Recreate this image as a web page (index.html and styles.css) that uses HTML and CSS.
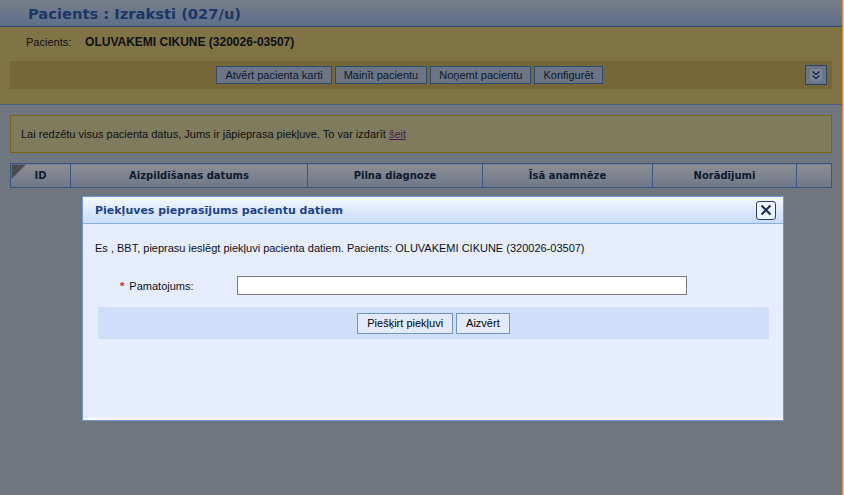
FILE: index.html
```html
<!DOCTYPE html>
<html lang="lv">
<head>
    <meta charset="UTF-8">
    <title>Pacients : Izraksti (027/u)</title>
    <link rel="stylesheet" href="styles.css">
</head>
<body>
    <div class="screen">
        <div class="page">
            <div class="title-bar">
                <h1>Pacients : Izraksti (027/u)</h1>
            </div>

            <div class="patient-panel">
                <div class="patient-line">
                    <span class="patient-label">Pacients:</span>
                    <strong>OLUVAKEMI CIKUNE (320026-03507)</strong>
                </div>
                <div class="toolbar">
                    <div class="toolbar-buttons">
                        <button class="tool-btn">Atvērt pacienta karti</button>
                        <button class="tool-btn">Mainīt pacientu</button>
                        <button class="tool-btn">Noņemt pacientu</button>
                        <button class="tool-btn">Konfigurēt</button>
                    </div>
                    <button class="expand-btn" title="Izvērst">
                        <svg width="14" height="14" viewBox="0 0 14 14">
                            <rect x="1" y="1" width="12" height="12" fill="#7d8696"/>
                            <path d="M3.5 3.5 L7 6.5 L10.5 3.5 M3.5 7.5 L7 10.5 L10.5 7.5" fill="none" stroke="#1b2d4f" stroke-width="1.6"/>
                        </svg>
                    </button>
                </div>
            </div>

            <div class="content">
                <div class="notice">
                    Lai redzētu visus pacienta datus, Jums ir jāpieprasa piekļuve. To var izdarīt <a href="#">šeit</a>
                </div>

                <table class="grid">
                    <thead>
                        <tr>
                            <th class="col-id">ID</th>
                            <th class="col-date">Aizpildīšanas datums</th>
                            <th class="col-diag">Pilna diagnoze</th>
                            <th class="col-anam">Īsā anamnēze</th>
                            <th class="col-notes">Norādījumi</th>
                            <th class="col-extra"></th>
                        </tr>
                    </thead>
                </table>
            </div>
        </div>
        <div class="edge"></div>
    </div>

    <div class="dialog">
        <div class="dialog-header">
            <span class="dialog-title">Piekļuves pieprasījums pacientu datiem</span>
            <button class="dialog-close" title="Aizvērt">
                <svg width="12" height="12" viewBox="0 0 12 12">
                    <path d="M1.5 1.5 L10.5 10.5 M10.5 1.5 L1.5 10.5" stroke="#1c2f55" stroke-width="2.2"/>
                </svg>
            </button>
        </div>
        <div class="dialog-body">
            <p class="dialog-text">Es , BBT, pieprasu ieslēgt piekļuvi pacienta datiem. Pacients: OLUVAKEMI CIKUNE (320026-03507)</p>
            <div class="form-row">
                <label for="reason"><span class="required">*</span> Pamatojums:</label>
                <input type="text" id="reason">
            </div>
            <div class="dialog-actions">
                <button class="dlg-btn">Piešķirt piekļuvi</button>
                <button class="dlg-btn">Aizvērt</button>
            </div>
        </div>
    </div>
</body>
</html>
```

FILE: styles.css
```css
body {
    margin: 0;
    font-family: "Liberation Sans", Arial, sans-serif;
    font-size: 11px;
    color: #0e1016;
    background: #6f7680;
}

.screen {
    display: flex;
    height: 495px;
}

.page {
    flex: 1;
    background: #6f7680;
}

.edge {
    width: 1px;
    border-left: 1px solid #e38d22;
    background: #d8d8d8;
}

/* title */
.title-bar {
    height: 26px;
    background: linear-gradient(to bottom, #787e88, #5e6f8b);
    border-bottom: 1px solid #2f4a74;
    padding-left: 28px;
}

.title-bar h1 {
    margin: 0;
    font-family: "DejaVu Sans", Verdana, sans-serif;
    font-size: 14.7px;
    font-weight: bold;
    line-height: 28px;
    color: #1a3767;
}

/* patient panel */
.patient-panel {
    background: #807444;
    border-bottom: 1px solid #4a5f80;
    padding: 8px 10px 15px;
}

.patient-line {
    height: 14px;
    line-height: 14px;
    padding-left: 16px;
    margin-bottom: 12px;
}

.patient-label {
    display: inline-block;
    width: 56px;
}

.patient-line strong {
    font-size: 12px;
}

.toolbar {
    display: flex;
    align-items: center;
    height: 28px;
    background: #766836;
    padding-right: 5px;
}

.toolbar-buttons {
    flex: 1;
    display: flex;
    justify-content: center;
    gap: 3px;
    padding-left: 4px;
}

.tool-btn {
    height: 18px;
    padding: 0 8px;
    font-family: "Liberation Sans", Arial, sans-serif;
    font-size: 11px;
    color: #0e1a2c;
    background: #6c7584;
    border: 1px solid #2e4a73;
}

.expand-btn {
    width: 22px;
    height: 20px;
    padding: 0;
    display: flex;
    align-items: center;
    justify-content: center;
    background: #6c7584;
    border: 1px solid #2a4470;
}

/* content */
.content {
    padding: 10px 10px 0;
}

.notice {
    height: 36px;
    line-height: 37px;
    padding-left: 10px;
    background: #7f7b5d;
    border: 1px solid #7a650e;
    margin-bottom: 10px;
}

.notice a {
    color: #4b1a60;
}

.grid {
    width: 100%;
    border-collapse: collapse;
}

.grid th {
    height: 23px;
    padding: 0;
    font-family: "DejaVu Sans", Verdana, sans-serif;
    font-size: 10px;
    font-weight: bold;
    color: #0f1a30;
    background: linear-gradient(to bottom, #8c8e94, #6e7788);
    border: 1px solid #375683;
}

.grid .col-id {
    width: 59px;
    background: linear-gradient(135deg, #4a4a4c 10px, transparent 10px),
                linear-gradient(to bottom, #8c8e94, #6e7788);
}

.grid .col-date { width: 236px; }
.grid .col-diag { width: 174px; }
.grid .col-anam { width: 169px; }
.grid .col-notes { width: 143px; }

/* dialog */
.dialog {
    position: absolute;
    left: 82px;
    top: 196px;
    width: 700px;
    border: 1px solid #6b98d6;
    background: #fff;
}

.dialog-header {
    display: flex;
    align-items: center;
    height: 26px;
    padding: 0 7px 0 12px;
    background: linear-gradient(to bottom, #f3f8ff, #c9dcf7);
    border-bottom: 1px solid #8ab0e0;
}

.dialog-title {
    flex: 1;
    font-family: "DejaVu Sans", Verdana, sans-serif;
    font-size: 11px;
    font-weight: bold;
    color: #1c4488;
}

.dialog-close {
    width: 20px;
    height: 19px;
    padding: 0;
    display: flex;
    align-items: center;
    justify-content: center;
    background: #eef4ff;
    border: 1px solid #2c3e62;
    border-radius: 3px;
}

.dialog-body {
    height: 194px;
    background: #e5edfe;
    padding: 0 15px;
    margin-bottom: 2px;
}

.dialog-text {
    margin: 0 0 0 -3px;
    padding-top: 17px;
    height: 19px;
    line-height: 14px;
}

.form-row {
    display: flex;
    align-items: center;
    height: 19px;
    margin-top: 16px;
}

.form-row label {
    width: 139px;
    padding-left: 22px;
    box-sizing: border-box;
}

.required {
    color: #e02020;
    font-weight: bold;
    margin-right: 2px;
}

.form-row input {
    width: 450px;
    height: 19px;
    box-sizing: border-box;
    border: 1px solid #7a7a7a;
    background: #fff;
    margin: 0;
}

.dialog-actions {
    display: flex;
    justify-content: center;
    gap: 3px;
    height: 32px;
    align-items: center;
    margin-top: 12px;
    margin-right: -1px;
    background: #d0dff9;
}

.dlg-btn {
    height: 21px;
    padding: 0 9px;
    font-family: "Liberation Sans", Arial, sans-serif;
    font-size: 11px;
    color: #000;
    background: #e3ebfb;
    border: 1px solid #7394c8;
}
```
